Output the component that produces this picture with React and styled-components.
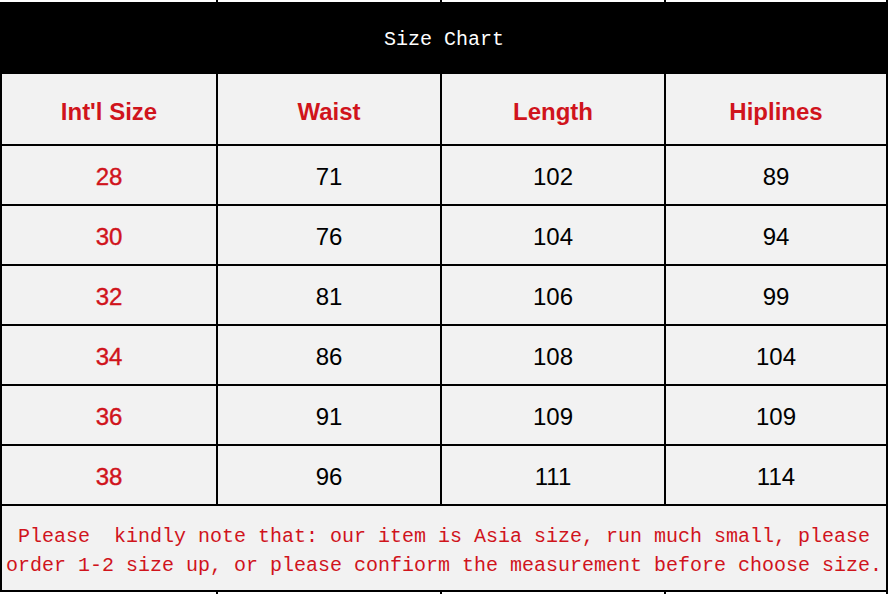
import React from "react";
import styled, { createGlobalStyle } from "styled-components";

const rows = [
  ["28", "71", "102", "89"],
  ["30", "76", "104", "94"],
  ["32", "81", "106", "99"],
  ["34", "86", "108", "104"],
  ["36", "91", "109", "109"],
  ["38", "96", "111", "114"],
];

const headers = ["Int'l Size", "Waist", "Length", "Hiplines"];

const GlobalStyle = createGlobalStyle`
  html, body {
    margin: 0;
    padding: 0;
    background: #ffffff;
  }
`;

const App = () => {
  return (
    <Page>
      <GlobalStyle />
      <Stub>
        <span />
        <span />
        <span />
        <span />
      </Stub>
      <Table>
        <Title>Size Chart</Title>
        {headers.map((h) => (
          <HeadCell key={h}>{h}</HeadCell>
        ))}
        {rows.map((r) =>
          r.map((v, i) => (
            <Cell key={r[0] + "-" + i} $red={i === 0}>
              {v}
            </Cell>
          ))
        )}
        <Note>
          Please&nbsp; kindly note that: our item is Asia size, run much small, please
          <br />
          order 1-2 size up, or please confiorm the measurement before choose size.
        </Note>
      </Table>
      <Stub>
        <span />
        <span />
        <span />
        <span />
      </Stub>
    </Page>
  );
};

export default App;

const Page = styled.div`
  width: 891px;
  height: 594px;
  overflow: hidden;
  background: #fff;
`;

const Stub = styled.div`
  width: 888px;
  height: 2px;
  display: grid;
  grid-template-columns: 214px 222px 222px 220px;
  column-gap: 2px;
  padding: 0 2px;
  box-sizing: border-box;
  background: #000;
  span {
    background: #fff;
  }
  span:first-child {
    margin-left: -2px;
  }
`;

const Table = styled.div`
  width: 888px;
  box-sizing: border-box;
  display: grid;
  grid-template-columns: 214px 222px 222px 220px;
  grid-template-rows: 70px 70px repeat(6, 58px) 84px;
  gap: 2px;
  padding: 0 2px 2px 2px;
  background: #000;
`;

const Title = styled.div`
  grid-column: 1 / -1;
  background: #000;
  color: #fff;
  font-family: "Liberation Mono", monospace;
  font-size: 20px;
  display: flex;
  align-items: center;
  justify-content: center;
  padding-top: 5px;
`;

const HeadCell = styled.div`
  background: #f2f2f2;
  color: #d0141c;
  font-family: "Liberation Sans", Arial, sans-serif;
  font-weight: bold;
  font-size: 24px;
  display: flex;
  align-items: center;
  justify-content: center;
  padding-top: 5px;
`;

const Cell = styled.div`
  background: #f2f2f2;
  color: ${(p) => (p.$red ? "#d0141c" : "#000")};
  font-family: "Liberation Sans", Arial, sans-serif;
  font-size: 24px;
  -webkit-text-stroke: ${(p) => (p.$red ? "0.4px" : "0")};
  display: flex;
  align-items: center;
  justify-content: center;
  padding-top: 3px;
`;

const Note = styled.div`
  grid-column: 1 / -1;
  background: #f2f2f2;
  color: #d0141c;
  font-family: "Liberation Mono", monospace;
  font-size: 20px;
  line-height: 29px;
  text-align: center;
  white-space: nowrap;
  display: flex;
  flex-direction: column;
  justify-content: center;
  padding-top: 5px;
`;
